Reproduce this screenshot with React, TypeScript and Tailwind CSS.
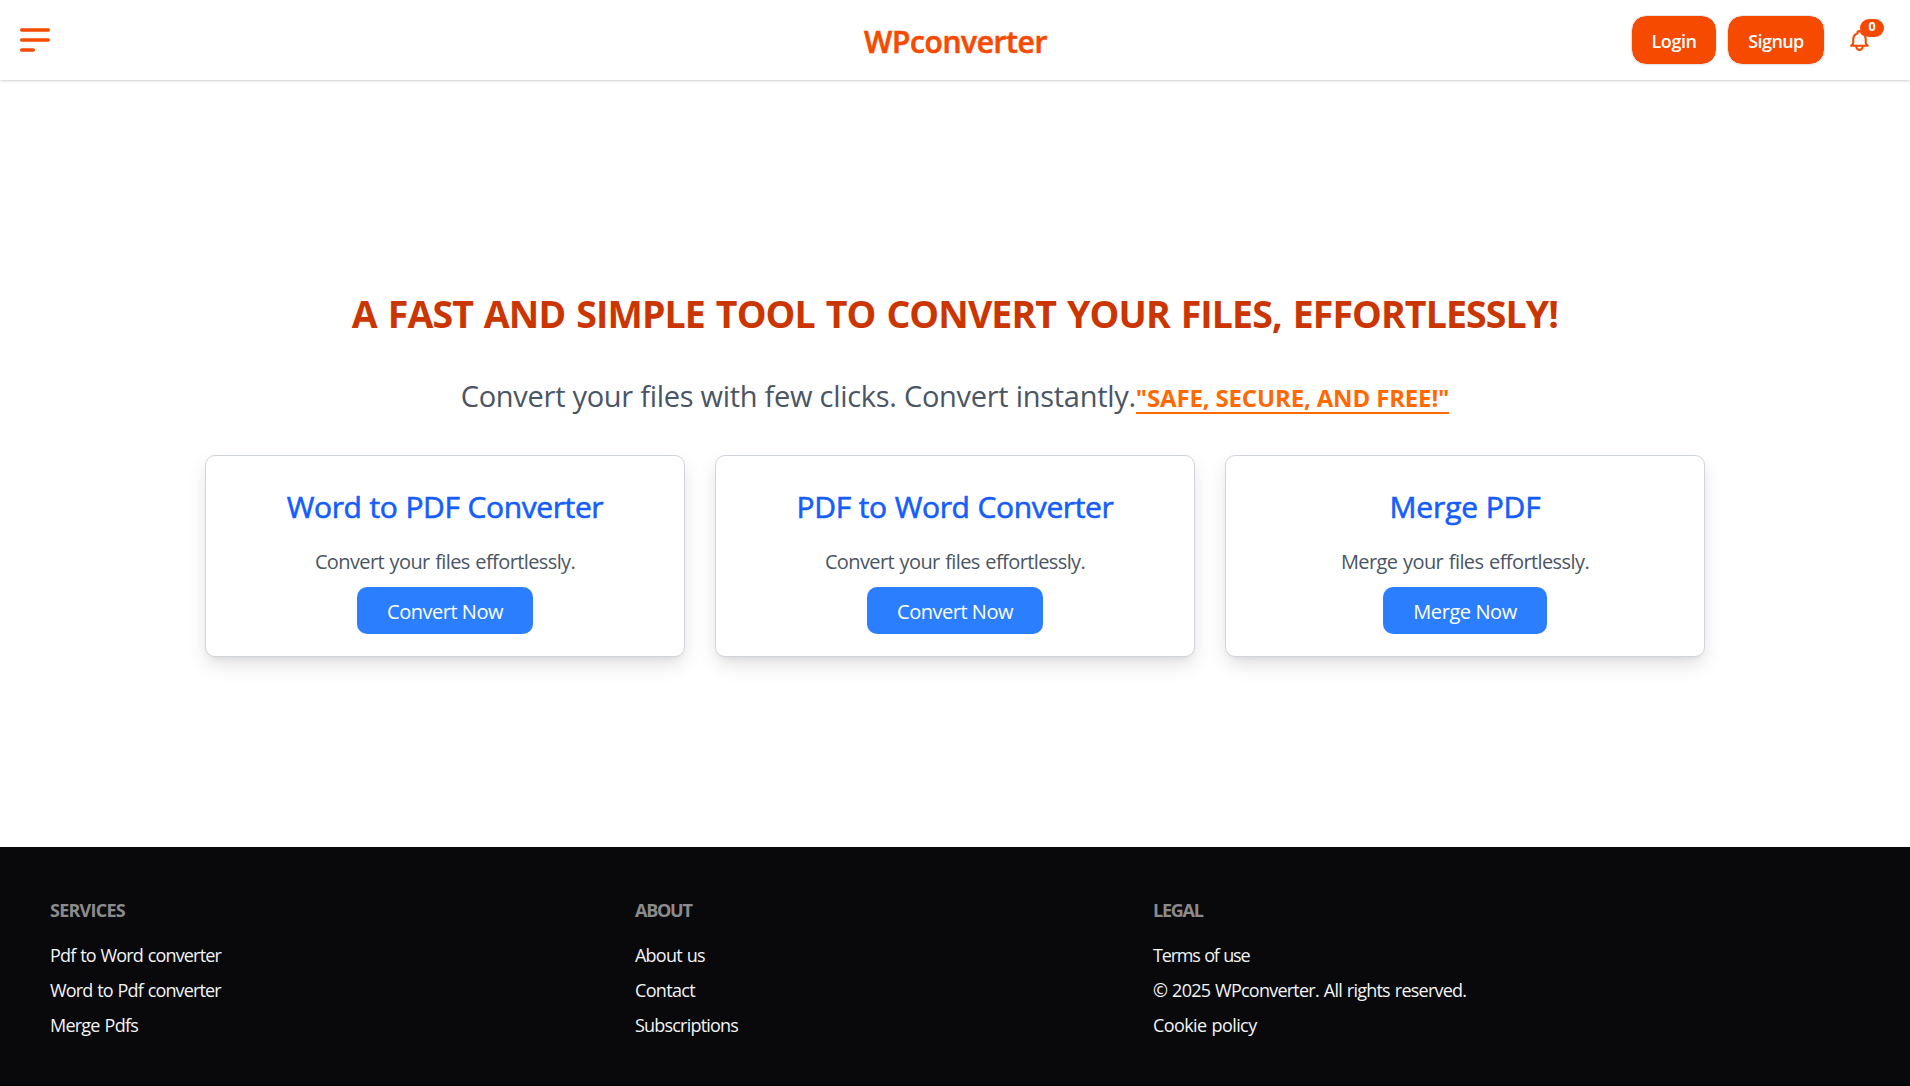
import React from "react";

type CardProps = { title: string; titleClass: string; text: string; textClass: string; action: string; actionClass: string };

const cards: CardProps[] = [
  {
    title: "Word to PDF Converter",
    titleClass: "tracking-[-0.4px] [word-spacing:0.6px]",
    text: "Convert your files effortlessly.",
    textClass: "tracking-[-0.61px] [word-spacing:1px]",
    action: "Convert Now",
    actionClass: "w-[176px] tracking-[-0.48px]",
  },
  {
    title: "PDF to Word Converter",
    titleClass: "tracking-[-0.38px] [word-spacing:0.6px]",
    text: "Convert your files effortlessly.",
    textClass: "tracking-[-0.61px] [word-spacing:1px]",
    action: "Convert Now",
    actionClass: "w-[176px] tracking-[-0.48px]",
  },
  {
    title: "Merge PDF",
    titleClass: "tracking-[-0.15px]",
    text: "Merge your files effortlessly.",
    textClass: "tracking-[-0.59px] [word-spacing:1px]",
    action: "Merge Now",
    actionClass: "w-[164px] tracking-[-0.42px]",
  },
];

const columns = [
  {
    heading: "SERVICES",
    headingClass: "tracking-[-0.77px]",
    links: [
      { label: "Pdf to Word converter", cls: "tracking-[-0.85px] [word-spacing:1px]" },
      { label: "Word to Pdf converter", cls: "tracking-[-0.86px] [word-spacing:1px]" },
      { label: "Merge Pdfs", cls: "tracking-[-0.77px] [word-spacing:1px]" },
    ],
  },
  {
    heading: "ABOUT",
    headingClass: "tracking-[-1.25px]",
    links: [
      { label: "About us", cls: "tracking-[-0.77px] [word-spacing:1px]" },
      { label: "Contact", cls: "tracking-[-0.67px]" },
      { label: "Subscriptions", cls: "tracking-[-0.8px]" },
    ],
  },
  {
    heading: "LEGAL",
    headingClass: "tracking-[-1.25px]",
    links: [
      { label: "Terms of use", cls: "tracking-[-1.18px] [word-spacing:1px]" },
      { label: "© 2025 WPconverter. All rights reserved.", cls: "tracking-[-0.77px] [word-spacing:1px]" },
      { label: "Cookie policy", cls: "tracking-[-0.6px] [word-spacing:1px]" },
    ],
  },
];

function Card({ title, titleClass, text, textClass, action, actionClass }: CardProps) {
  return (
    <article className="flex h-[202px] w-[480px] flex-col items-center rounded-[10px] border border-gray-300 bg-white pt-[33px] shadow-[0_9px_20px_-2px_rgba(0,0,0,0.13),0_4px_6px_-4px_rgba(0,0,0,0.1)]">
      <h2 className={`text-[30px] leading-9 font-normal text-blue-600 [-webkit-text-stroke:0.6px_currentColor] ${titleClass}`}>{title}</h2>
      <p className={`mt-[23px] text-[20px] leading-7 text-gray-600 ${textClass}`}>{text}</p>
      <button className={`mt-[11px] h-[47px] rounded-[10px] bg-blue-500 pt-[3px] text-[20px] leading-7 text-white ${actionClass}`}>{action}</button>
    </article>
  );
}

export default function App() {
  return (
    <div className="flex h-[1086px] flex-col overflow-hidden bg-white font-['Open_Sans',sans-serif] whitespace-nowrap">
      <header className="grid h-20 shrink-0 grid-cols-3 items-center bg-white pr-[38px] pl-[15px] shadow-[0_1px_3px_rgba(0,0,0,0.14),0_1px_2px_-1px_rgba(0,0,0,0.14)]">
        <button aria-label="Menu" className="w-10 text-orange-600">
          <svg className="size-10" viewBox="0 0 24 24" fill="none" stroke="currentColor" strokeWidth="2" strokeLinecap="round" strokeLinejoin="round">
            <path d="M4 6h16M4 12h16M4 18h7" />
          </svg>
        </button>
        <div className="relative left-3 pt-[3px] text-center text-[30px] leading-9 font-semibold tracking-[-0.4px] text-orange-600 [-webkit-text-stroke:0.6px_currentColor]">WPconverter</div>
        <div className="flex items-center justify-end">
          <button className="h-[50px] w-[86px] rounded-[15px] border border-gray-200 bg-orange-600 bg-clip-padding pt-px text-[18px] leading-7 font-semibold tracking-[-0.44px] text-white shadow-xs">Login</button>
          <button className="ml-[10px] h-[50px] w-[98px] rounded-[15px] border border-gray-200 bg-orange-600 bg-clip-padding pt-px text-[18px] leading-7 font-semibold tracking-[-0.6px] text-white shadow-xs">Signup</button>
          <button aria-label="Notifications" className="relative ml-[22px] text-orange-600">
            <svg className="size-[25px]" viewBox="0 0 24 24" fill="none" stroke="currentColor" strokeWidth="2" strokeLinecap="round" strokeLinejoin="round">
              <path d="M15 17h5l-1.405-1.405A2.032 2.032 0 0118 14.158V11a6.002 6.002 0 00-4-5.659V5a2 2 0 10-4 0v.341C7.67 6.165 6 8.388 6 11v3.159c0 .538-.214 1.055-.595 1.436L4 17h5m6 0v1a3 3 0 11-6 0v-1m6 0H9" />
            </svg>
            <span className="absolute -top-[9px] left-[13px] flex h-[18px] w-6 items-center justify-center rounded-full bg-orange-600 text-[12.5px] leading-none font-bold text-white">0</span>
          </button>
        </div>
      </header>

      <main className="flex h-[767px] shrink-0 flex-col items-center pt-[210px]">
        <h1 className="text-[37.5px] leading-[48px] font-bold tracking-[-0.91px] text-orange-700 [word-spacing:2.1px]">
          A FAST AND SIMPLE TOOL TO CONVERT YOUR FILES, EFFORTLESSLY!
        </h1>
        <p className="mt-[38px] flex h-10 text-[29px] leading-10 tracking-[-0.28px] text-gray-600">
          Convert your files with few clicks. Convert instantly.
          <span className="h-[38px] border-b-2 border-orange-500 pt-[2px] text-[24px] leading-10 font-bold tracking-[-0.16px] text-orange-500">
            "SAFE, SECURE, AND FREE!"
          </span>
        </p>
        <section className="mt-[39px] flex gap-[30px]">
          {cards.map((card) => (
            <Card key={card.title} {...card} />
          ))}
        </section>
      </main>

      <footer className="grid flex-1 grid-cols-[585px_518px_1fr] border-b border-black bg-zinc-950 px-[50px] pt-[49px] text-[18px] leading-7">
        {columns.map((col) => (
          <nav key={col.heading}>
            <h3 className={`font-bold text-[#8b8b8c] ${col.headingClass}`}>{col.heading}</h3>
            <ul className="mt-[17px] flex flex-col gap-[7px] text-gray-100">
              {col.links.map((link) => (
                <li key={link.label} className={link.cls}>{link.label}</li>
              ))}
            </ul>
          </nav>
        ))}
      </footer>
    </div>
  );
}
